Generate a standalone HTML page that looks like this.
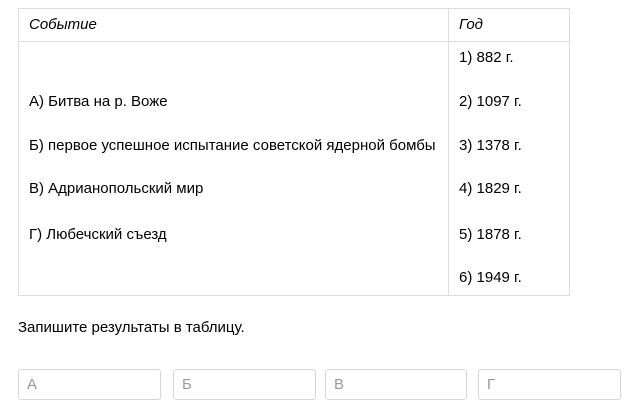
<!DOCTYPE html>
<html><head><meta charset="utf-8"><style>
body{margin:0;width:643px;height:412px;background:#fff;font-family:"Liberation Sans","DejaVu Sans",sans-serif;font-size:15px;color:#000;position:relative;overflow:hidden}
.b{position:absolute;border:1px solid #ddd;box-sizing:border-box}
.t{position:absolute;white-space:nowrap;line-height:18px;letter-spacing:0}
.i{font-style:italic}
.in{position:absolute;top:369px;height:31px;border:1px solid #d6d6d6;border-radius:3px;box-sizing:border-box;color:#999;font-size:15px;line-height:29px;padding-left:8px}
</style></head><body>
<div class="b" style="left:18px;top:8px;width:552px;height:288px"></div>
<div style="position:absolute;left:18px;top:41px;width:552px;height:1px;background:#ddd"></div>
<div style="position:absolute;left:448px;top:8px;width:1px;height:288px;background:#ddd"></div>
<div class="t i" style="left:29px;top:16px">Событие</div>
<div class="t i" style="left:459px;top:16px">Год</div>
<div class="t" style="left:29px;top:93px">А) Битва на р. Воже</div>
<div class="t" style="left:29px;top:137px">Б) первое успешное испытание советской ядерной бомбы</div>
<div class="t" style="left:29px;top:180px">В) Адрианопольский мир</div>
<div class="t" style="left:29px;top:226px">Г) Любечский съезд</div>
<div class="t" style="left:459px;top:49px">1) 882 г.</div>
<div class="t" style="left:459px;top:93px">2) 1097 г.</div>
<div class="t" style="left:459px;top:137px">3) 1378 г.</div>
<div class="t" style="left:459px;top:180px">4) 1829 г.</div>
<div class="t" style="left:459px;top:226px">5) 1878 г.</div>
<div class="t" style="left:459px;top:269px">6) 1949 г.</div>
<div class="t" style="left:18px;top:319px">Запишите результаты в таблицу.</div>
<div class="in" style="left:18px;width:143px">А</div>
<div class="in" style="left:173px;width:143px">Б</div>
<div class="in" style="left:325px;width:142px">В</div>
<div class="in" style="left:478px;width:143px">Г</div>
</body></html>
